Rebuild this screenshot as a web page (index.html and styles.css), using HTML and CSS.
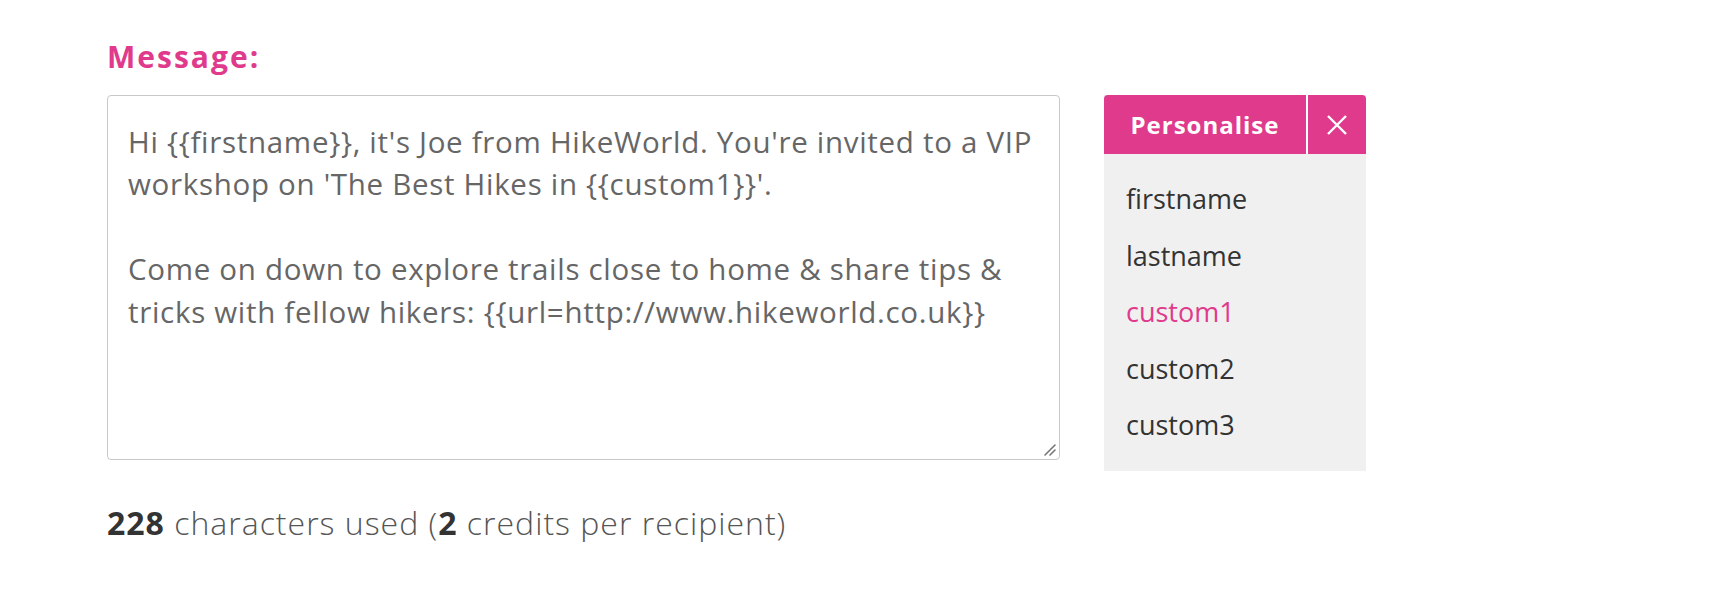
FILE: index.html
```html
<!DOCTYPE html>
<html lang="en">
<head>
<meta charset="utf-8">
<title>Message</title>
<link rel="stylesheet" href="styles.css">
</head>
<body>
<div class="page">
  <div class="label">Message:</div>
  <div class="row">
    <div class="textarea">
      <div class="line">Hi {{firstname}}, it's Joe from HikeWorld. You're invited to a VIP</div>
      <div class="line">workshop on 'The Best Hikes in {{custom1}}'.</div>
      <div class="line">&nbsp;</div>
      <div class="line">Come on down to explore trails close to home &amp; share tips &amp;</div>
      <div class="line">tricks with fellow hikers: {{url=http://www.hikeworld.co.uk}}</div>
      <svg class="grip" width="14" height="14" viewBox="0 0 14 14"><path d="M3 13 L13 3 M8 13 L13 8" stroke="#777" stroke-width="1.6" fill="none" stroke-linecap="round"/></svg>
    </div>
    <div class="panel">
      <div class="panel-head">
        <div class="panel-title">Personalise</div>
        <div class="panel-close"><svg width="22" height="22" viewBox="0 0 22 22"><path d="M2 2 L20 20 M20 2 L2 20" stroke="#fff" stroke-width="2.4" fill="none"/></svg></div>
      </div>
      <ul class="panel-list">
        <li class="item">firstname</li>
        <li class="item">lastname</li>
        <li class="item active">custom1</li>
        <li class="item">custom2</li>
        <li class="item">custom3</li>
      </ul>
    </div>
  </div>
  <div class="footer"><b>228</b> characters used (<b>2</b> credits per recipient)</div>
</div>
</body>
</html>
```

FILE: styles.css
```css
html, body {
  margin: 0;
  padding: 0;
  background: #fff;
}
.page {
  padding: 36px 0 0 107px;
  font-family: "Open Sans", Lato, sans-serif;
}
.label {
  color: #e03a8c;
  font-weight: 700;
  font-size: 30px;
  line-height: 42px;
  letter-spacing: 2px;
}
.row {
  display: flex;
  gap: 44px;
  margin-top: 17px;
  align-items: flex-start;
}
.textarea {
  position: relative;
  box-sizing: border-box;
  width: 953px;
  height: 365px;
  border: 1px solid #c8c8c8;
  border-radius: 4px;
  padding: 25px 20px;
  color: #666;
  font-size: 29.5px;
  letter-spacing: 0.7px;
  line-height: 42.4px;
  white-space: nowrap;
}
.grip {
  position: absolute;
  right: 3px;
  bottom: 3px;
}
.panel {
  width: 262px;
  background: #f0f0f0;
}
.panel-head {
  display: flex;
  height: 59px;
  background: #e03a8c;
  border-radius: 4px 4px 0 0;
  color: #fff;
}
.panel-title {
  flex: 1;
  display: flex;
  align-items: center;
  justify-content: center;
  font-weight: 700;
  font-size: 24px;
  letter-spacing: 1px;
  border-right: 2px solid #fff;
}
.panel-close {
  width: 58px;
  display: flex;
  align-items: center;
  justify-content: center;
}
.panel-list {
  list-style: none;
  margin: 0;
  padding: 17px 0 17px 22px;
}
.item {
  height: 56.5px;
  line-height: 56.5px;
  font-size: 27px;
  color: #333;
}
.item.active {
  color: #e03a8c;
}
.footer {
  margin-top: 32px;
  font-family: "Open Sans", sans-serif;
  font-weight: 300;
  font-size: 32px;
  letter-spacing: 1px;
  color: #555;
  line-height: 40px;
}
.footer b {
  font-weight: 700;
  color: #333;
}
```
